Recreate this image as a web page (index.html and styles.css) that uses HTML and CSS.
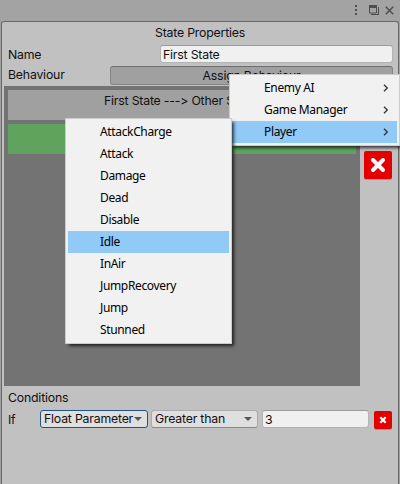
FILE: index.html
```html
<!DOCTYPE html>
<html lang="en">
<head>
<meta charset="utf-8">
<title>State Properties</title>
<link rel="stylesheet" href="styles.css">
</head>
<body>
<div class="window">
  <header class="titlebar">
    <svg class="dots" width="4" height="12" viewBox="0 0 4 12"><path d="M1 0h2v2H1zM1 4h2v2H1zM1 8h2v2H1z" fill="#4e4e4e"/></svg>
    <svg class="restore" width="11" height="11" viewBox="0 0 11 11"><path d="M.5 1v7h7V1z" fill="none" stroke="#4e4e4e"/><path d="M0 0h8v3H0zM9 2h1v8H2V9h7z" fill="#4e4e4e"/></svg>
    <svg class="close" width="9" height="9" viewBox="0 0 9 9"><path d="M.8.8l7.400 7.400M8.200.8L.8 8.200" stroke="#4e4e4e" stroke-width="1.500"/></svg>
  </header>
  <main class="panel">
    <h1 class="heading">State Properties</h1>
    <div class="row"><span class="label">Name</span><div class="field name">First State</div></div>
    <div class="row"><span class="label">Behaviour</span><div class="assign">Assign Behaviour</div></div>
    <div class="transitions">
      <div class="list">
        <div class="transition">First State ---&gt; Other State</div>
        <div class="transition active"></div>
      </div>
      <button class="remove large" aria-label="Remove"><svg width="16" height="16" viewBox="0 0 16 16"><path d="M3 3l10 10M13 3L3 13" stroke="#fff" stroke-width="4" stroke-linecap="round"/></svg></button>
    </div>
    <h2 class="subheading">Conditions</h2>
    <div class="condition">
      <span class="if">If</span>
      <div class="select focused"><span class="float">Float Parameter</span><i class="arrow"></i></div>
      <div class="select"><span>Greater than</span><i class="arrow"></i></div>
      <div class="field value">3</div>
      <button class="remove small" aria-label="Remove"><svg width="8" height="8" viewBox="0 0 8 8"><path d="M1.300 1.300l5.400 5.400M6.700 1.300L1.300 6.700" stroke="#fff" stroke-width="2.200"/></svg></button>
    </div>
  </main>
  <ul class="menu groups">
    <li><span>Enemy AI</span><svg class="chevron" width="6" height="8" viewBox="0 0 6 8"><path d="M1 .7L4.300 4 1 7.300"/></svg></li>
    <li><span>Game Manager</span><svg class="chevron" width="6" height="8" viewBox="0 0 6 8"><path d="M1 .7L4.300 4 1 7.300"/></svg></li>
    <li class="hover"><span>Player</span><svg class="chevron" width="6" height="8" viewBox="0 0 6 8"><path d="M1 .7L4.300 4 1 7.300"/></svg></li>
  </ul>
  <ul class="menu states">
    <li>AttackCharge</li><li>Attack</li><li>Damage</li><li>Dead</li><li>Disable</li><li class="hover">Idle</li><li>InAir</li><li>JumpRecovery</li><li>Jump</li><li>Stunned</li>
  </ul>
</div>
</body>
</html>
```
FILE: styles.css
```css
* { box-sizing: border-box; }
body { margin: 0; background: #a3a3a3; }
.window {
  position: relative;
  width: 400px;
  height: 484px;
  overflow: hidden;
  font: 12.3px/18px Inter, sans-serif;
  letter-spacing: -.2px;
  font-variant-ligatures: none;
  font-feature-settings: "calt" 0;
  color: #111;
  white-space: nowrap;
}
.titlebar { height: 21px; display: flex; justify-content: flex-end; align-items: flex-start; padding: 5px 6px 0 0; }
.dots { margin-right: 11px; }
.restore { margin-right: 5px; }
.close { margin-top: 1px; }
.panel {
  height: 463px;
  margin: 0 1px;
  border: 1px solid #686868;
  border-bottom: 0;
  border-radius: 3px 3px 0 0;
  background: #c1c1c1;
}
.heading, .subheading { margin: 0; font-size: inherit; font-weight: 400; }
.heading { height: 22px; line-height: 21px; text-align: center; }
.row { height: 20px; display: flex; align-items: center; justify-content: space-between; padding: 0 5px 0 6px; }
.label { padding-top: 2px; }
.field { background: #f0f0f0; border: 1px solid #b3b3b3; border-top-color: #9b9b9b; border-radius: 3px; height: 18px; line-height: 17px; padding-left: 2px; }
.name { width: 233px; }
.assign { width: 283px; height: 19px; line-height: 18px; margin-top: 2px; border: 1px solid #858585; border-top-color: #6d6d6d; border-radius: 3px; background: #a0a0a0; text-align: center; }
.transitions { display: flex; margin: 2px 0 0 2px; }
.list { width: 356px; height: 300px; padding: 4px; background: #737373; }
.transition { height: 30px; line-height: 22px; background: #a0a0a0; padding-left: 96px; margin-bottom: 4px; }
.active { background: #5fa35f; }
.remove { padding: 0; border: 0; background: #e50000; border-radius: 2px; display: flex; align-items: center; justify-content: center; box-shadow: 0 1px 0 #999; }
.large { width: 28px; height: 28px; margin: 65px 0 0 4px; }
.small { width: 18px; height: 18px; margin: 1px 0 0 5px; }
.subheading { margin: 3px 0 3px 6px; height: 18px; }
.condition { display: flex; padding-left: 6px; }
.if { width: 32px; padding-top: 1px; }
.select { width: 107px; height: 18px; line-height: 16px; border: 1px solid #aaa; border-bottom-color: #888; border-radius: 3px; background: #dfdfdf; padding: 0 5px 0 3px; margin-right: 4px; display: flex; justify-content: space-between; align-items: center; }
.focused { width: 108px; margin-right: 3px; border-color: #1f5488; }
.arrow { border: solid transparent; border-width: 4px 4px 0; border-top-color: #555; flex: none; }
.value { width: 107px; }
.menu {
  position: absolute;
  margin: 0;
  padding: 2px;
  list-style: none;
  background: #f1f1f1;
  border: 1px solid #ccc;
  box-shadow: 3px 3px 3px -1px rgba(0, 0, 0, .7);
  font: 12px/22px "Noto Sans", sans-serif;
  letter-spacing: -.35px;
  color: #000;
}
.menu li { height: 22px; padding-left: 32px; }
.menu .hover { background: #91c9f7; }
.groups { left: 229px; top: 74px; width: 171px; }
.groups li { display: flex; justify-content: space-between; align-items: center; padding-right: 8px; }
.chevron { fill: none; stroke: #333; stroke-width: 1.300; }
.states { left: 65px; top: 118px; width: 167px; }
```
